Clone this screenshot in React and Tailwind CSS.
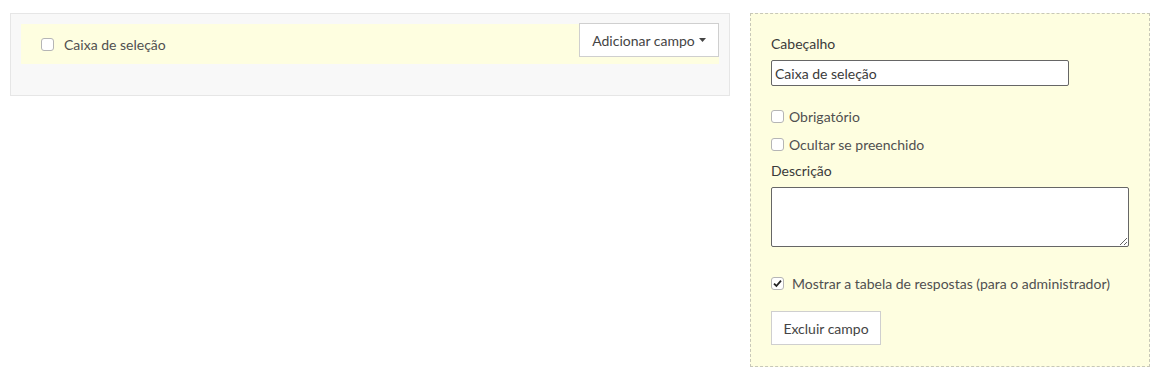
import { useState } from "react";

// Small custom checkbox that looks like the native one in the screenshot
const Box = ({ checked }) => (
  <span className="inline-flex items-center justify-center w-[13px] h-[13px] rounded-[3px] border border-[#b5b5b5] bg-white shrink-0">
    {checked && (
      <svg width="9" height="9" viewBox="0 0 9 9">
        <path d="M1 4.6 L3.4 7 L8 1.6" fill="none" stroke="#222" strokeWidth="1.8" />
      </svg>
    )}
  </span>
);

const App = () => {
  const [header, setHeader] = useState("Caixa de seleção");

  return (
    <div className="flex gap-5 pl-[10px] pt-[13px] text-[14px] text-[#505050] font-['Lato','Liberation_Sans',sans-serif]">
      {/* left: field list */}
      <div className="w-[720px] h-[83px] border border-[#e6e6e6] bg-[#f8f8f8] px-[10px] pt-[10px]">
        <div className="relative h-[40px] bg-[#fefee0] flex items-center pl-[20px]">
          <Box />
          <span className="ml-[10px]">Caixa de seleção</span>
          <button className="absolute right-0 top-[-1px] h-[34px] w-[140px] bg-white border border-[#cfcfcf] flex items-center justify-center gap-1 text-[#444]">
            Adicionar campo
            <svg width="7" height="4" viewBox="0 0 7 4">
              <path d="M0 0 L7 0 L3.5 4 Z" fill="#444" />
            </svg>
          </button>
        </div>
      </div>

      {/* right: field settings */}
      <div className="w-[400px] h-[354px] border border-dashed border-[#c8c8b8] bg-[#fefee0] px-[20px] pt-[21px]">
        <label className="block leading-[18px] text-[#3a3a3a]">Cabeçalho</label>
        <input
          className="mt-[7px] block w-[298px] h-[26px] border border-[#666] rounded-[2px] bg-white px-[3px] text-[#3a3a3a] outline-none"
          value={header}
          onChange={(e) => setHeader(e.target.value)}
        />
        <div className="mt-[21px] flex items-center gap-[5px] h-[18px]">
          <Box />
          <span>Obrigatório</span>
        </div>
        <div className="mt-[10px] flex items-center gap-[5px] h-[18px]">
          <Box />
          <span>Ocultar se preenchido</span>
        </div>
        <label className="block mt-[9px] leading-[18px] text-[#3a3a3a]">Descrição</label>
        <textarea className="mt-[7px] block w-[358px] h-[60px] border border-[#666] rounded-[2px] bg-white outline-none" />
        <div className="mt-[27px] flex items-center gap-[8px] h-[18px]">
          <Box checked />
          <span>Mostrar a tabela de respostas (para o administrador)</span>
        </div>
        <button className="mt-[19px] h-[34px] w-[110px] bg-white border border-[#cfcfcf] text-[#444]">
          Excluir campo
        </button>
      </div>
    </div>
  );
};

export default App;
